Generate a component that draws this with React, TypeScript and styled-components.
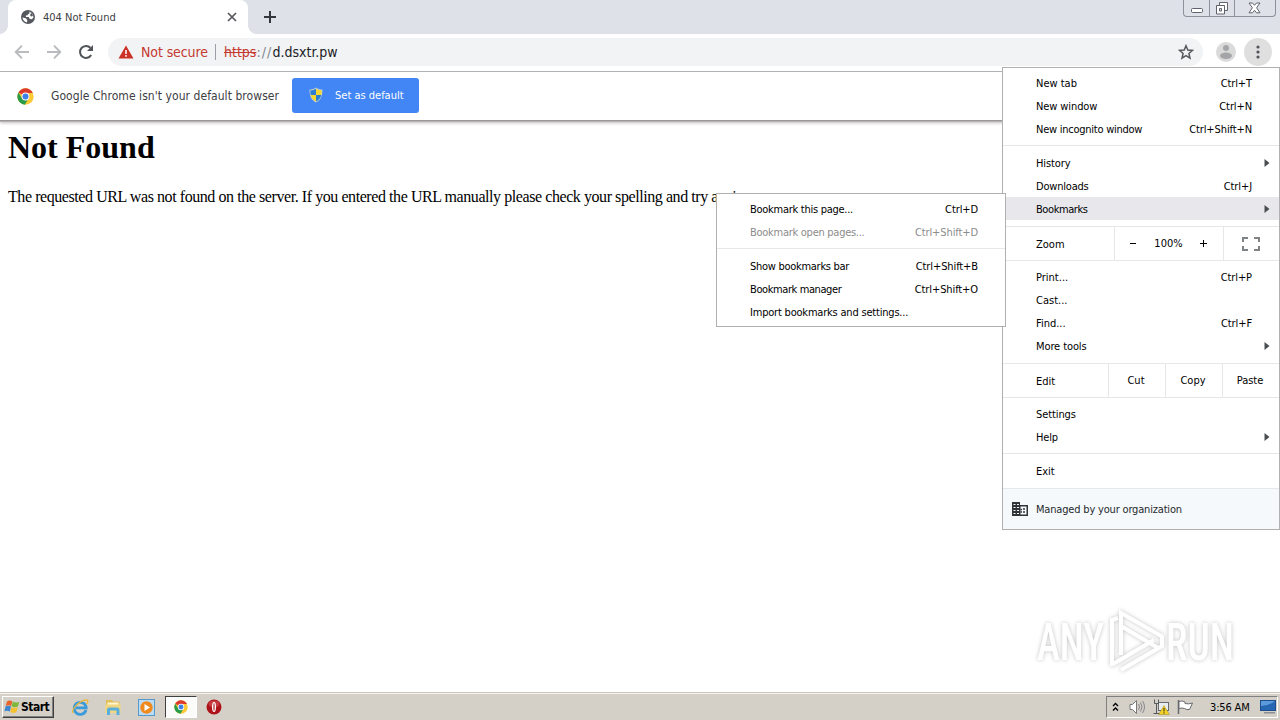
import React from "react";
import styled, { createGlobalStyle, css } from "styled-components";

const GlobalStyle = createGlobalStyle`
    * {
      box-sizing: border-box;
    }

    body {
      margin: 0;
      background: #fff;
      overflow: hidden;
    }
`;

const uiFont = css`
    font-family: "DejaVu Sans Condensed", "DejaVu Sans", sans-serif;
    font-stretch: condensed;
    white-space: pre;
`;

const StyledDesktop = styled.div`
    ${uiFont}
    display: flex;
    flex-direction: column;
    position: relative;
    width: 1280px;
    height: 720px;
    overflow: hidden;
    background: #fff;
    font-size: 11px;
    color: #000;
`;

const StyledTabStrip = styled.div`
    display: flex;
    height: 34px;
    padding-left: 8px;
    background: #dee1e8;
`;

const StyledTab = styled.div`
    display: flex;
    align-items: center;
    position: relative;
    width: 240px;
    height: 34px;
    padding: 0 10px 0 13px;
    border-radius: 8px 8px 0 0;
    background: #fff;
    color: #3c4043;

    &::before,
    &::after {
      content: "";
      position: absolute;
      bottom: 0;
      width: 8px;
      height: 8px;
    }

    &::before {
      left: -8px;
      background: radial-gradient(circle at 0 0, transparent 7.5px, #fff 8px);
    }

    &::after {
      right: -8px;
      background: radial-gradient(circle at 100% 0, transparent 7.5px, #fff 8px);
    }
`;

const StyledTabTitle = styled.span`
    flex: 1;
    margin-left: 8px;
`;

const StyledNewTab = styled.div`
    display: flex;
    align-items: center;
    margin-left: 15px;
`;

const StyledCaptionButtons = styled.div`
    display: flex;
    width: 93px;
    height: 17px;
    margin: 0 4px 0 auto;
    border: 1px solid #8d919b;
    border-top: 0;
    border-radius: 0 0 4px 4px;
`;

const StyledCaptionButton = styled.div<{ $width: number }>`
    display: flex;
    justify-content: center;
    width: ${({ $width }) => $width}px;

    & + & {
      border-left: 1px solid #8d919b;
    }
`;

const StyledToolbar = styled.div`
    display: flex;
    align-items: center;
    height: 38px;
    padding: 0 8px 1px 14px;
    border-bottom: 1px solid #b4b5b7;
`;

const StyledNavButton = styled.div`
    display: flex;
    width: 32px;
`;

const StyledOmnibox = styled.div`
    display: flex;
    align-items: center;
    width: 1095px;
    height: 28px;
    margin-left: -2px;
    padding: 0 9px 0 10px;
    border-radius: 14px;
    background: #f1f3f5;
    font-size: 14px;
    color: #202124;
`;

const StyledNotSecure = styled.span`
    width: 67px;
    margin-left: 7px;
    color: #c5392f;
    letter-spacing: -0.1px;
`;

const StyledOmniboxDivider = styled.div`
    width: 1px;
    height: 16px;
    margin: 0 8px 0 7px;
    background: #9aa0a6;
`;

const StyledUrl = styled.span`
    flex: 1;

    s {
      color: #c5392f;
    }

    i {
      font-style: normal;
      letter-spacing: 1.1px;
      color: #80868b;
    }
`;

const StyledAvatar = styled.div`
    display: flex;
    margin-left: 13px;
`;

const StyledMenuButton = styled.div`
    display: flex;
    align-items: center;
    justify-content: center;
    width: 28px;
    height: 28px;
    margin-left: 8px;
    border-radius: 50%;
    background: #dfdfe0;
`;

const StyledInfoBar = styled.div`
    display: flex;
    align-items: center;
    height: 49px;
    padding-left: 17px;
    border-bottom: 1px solid #9b9799;
    box-shadow: 0 1px 0 #b5b2b4, 0 2px 3px rgba(0, 0, 0, 0.25);
    font-size: 12px;
    color: #3c4043;
`;

const StyledInfoText = styled.span`
    width: 241px;
    margin-left: 17px;
    letter-spacing: 0.06px;
`;

const StyledDefaultButton = styled.div`
    display: flex;
    align-items: center;
    width: 127px;
    height: 35px;
    margin-bottom: 2px;
    padding-left: 17px;
    border-radius: 3px;
    background: #4285f4;
    font-size: 11px;
    color: #fff;

    span {
      margin-left: 12px;
    }
`;

const StyledPage = styled.div`
    flex: 1;
    padding: 0 8px;
    font-family: "Liberation Serif", serif;
    font-size: 16px;

    h1 {
      margin: 8px 0 0;
      font-size: 32px;
      line-height: 37px;
    }

    p {
      margin: 22px 0 0;
      line-height: 18px;
      letter-spacing: -0.43px;
    }
`;

const StyledMenu = styled.div<{ $left: number; $top: number; $width: number; $bottomGap?: number }>`
    position: absolute;
    left: ${({ $left }) => $left}px;
    top: ${({ $top }) => $top}px;
    width: ${({ $width }) => $width}px;
    padding: 3px 0 ${({ $bottomGap = 0 }) => $bottomGap}px;
    border: 1px solid #b0b0b0;
    background: #fff;
`;

const StyledMenuItem = styled.div<{ $active?: boolean; $disabled?: boolean }>`
    display: flex;
    align-items: center;
    justify-content: space-between;
    position: relative;
    height: 23px;
    padding: 1px 27px 0 33px;
    background: ${({ $active }) => ($active ? "#e8e8ec" : "transparent")};
    color: ${({ $disabled }) => ($disabled ? "#8c8c8c" : "#000")};
`;

const StyledItemLabel = styled.span<{ $tracking?: number }>`
    letter-spacing: ${({ $tracking = 0 }) => $tracking}px;
`;

const StyledShortcut = styled.span`
    letter-spacing: -0.1px;
`;

const StyledArrow = styled.svg`
    position: absolute;
    right: 9px;
    top: 7px;
`;

const StyledSeparator = styled.div<{ $before?: number; $after?: number }>`
    height: 1px;
    margin-top: ${({ $before = 5 }) => $before}px;
    margin-bottom: ${({ $after = 5 }) => $after}px;
    background: #e6e7e8;
`;

const StyledMenuRow = styled.div`
    display: flex;
    height: 33px;
    line-height: 32px;
`;

const StyledRowLabel = styled.div<{ $width: number }>`
    width: ${({ $width }) => $width}px;
    padding: 2px 0 0 33px;
`;

const StyledRowCell = styled.div<{ $width: number }>`
    display: flex;
    align-items: center;
    justify-content: center;
    width: ${({ $width }) => $width}px;
    padding-right: 2px;
    border-left: 1px solid #e6e7e8;
`;

const StyledZoomCell = styled(StyledRowCell)`
    justify-content: space-between;
    padding: 0 15px 0 14px;
`;

const StyledFullscreenCell = styled(StyledRowCell)`
    padding-right: 1px;
`;

const StyledManaged = styled.div`
    display: flex;
    align-items: center;
    height: 40px;
    padding-left: 9px;
    background: #f5f9fc;
    color: #26292d;

    span {
      margin-left: 8px;
      letter-spacing: -0.18px;
    }
`;

const StyledWatermark = styled.svg`
    position: absolute;
    left: 1030px;
    top: 602px;
    filter: drop-shadow(0 0 2px rgba(0, 0, 0, 0.24));
`;

const StyledTaskbar = styled.div`
    display: flex;
    align-items: center;
    height: 28px;
    padding: 1px 2px 0;
    border-top: 1px solid #c9c6bf;
    background: #d4d0c8;
    box-shadow: inset 0 1px 0 #f4f3f0;
`;

const StyledStartButton = styled.div`
    display: flex;
    align-items: center;
    width: 52px;
    height: 22px;
    padding-left: 1px;
    border: 1px solid;
    border-color: #fff #404040 #404040 #fff;
    box-shadow: inset -1px -1px 0 #808080;
    font-size: 12px;
    font-weight: bold;

    span {
      letter-spacing: -0.5px;
    }
`;

const StyledQuickLaunch = styled.div`
    display: flex;
    align-items: center;
    margin-left: 9px;
`;

const StyledTask = styled.div<{ $pressed?: boolean }>`
    display: flex;
    align-items: center;
    justify-content: center;
    width: 33.5px;
    height: 22px;
    border: 1px solid transparent;

    ${({ $pressed }) => $pressed && css`
      width: 32px;
      margin: 0 1px;
      border-color: #404040 #fff #fff #404040;
      background: #fbfbfa;
    `}
`;

const StyledTray = styled.div`
    display: flex;
    align-items: center;
    width: 172px;
    height: 22px;
    margin-left: auto;
    padding-left: 5px;
    border: 1px solid;
    border-color: #808080 #fff #fff #808080;
`;

const StyledTrayIcon = styled.div<{ $gap: number }>`
    display: flex;
    margin-left: ${({ $gap }) => $gap}px;
`;

const StyledClock = styled.span`
    width: 41px;
    margin: 1px 0 0 16px;
    letter-spacing: -0.15px;
`;

type MenuEntry = {
  label: string;
  shortcut?: string;
  submenu?: boolean;
  active?: boolean;
  disabled?: boolean;
  tracking?: number;
};

const tabItems: MenuEntry[] = [
  { label: "New tab", shortcut: "Ctrl+T" },
  { label: "New window", shortcut: "Ctrl+N", tracking: -0.1 },
  { label: "New incognito window", shortcut: "Ctrl+Shift+N", tracking: -0.25 },
];

const historyItems: MenuEntry[] = [
  { label: "History", submenu: true, tracking: -0.1 },
  { label: "Downloads", shortcut: "Ctrl+J", tracking: -0.2 },
  { label: "Bookmarks", submenu: true, active: true, tracking: -0.42 },
];

const toolItems: MenuEntry[] = [
  { label: "Print...", shortcut: "Ctrl+P" },
  { label: "Cast..." },
  { label: "Find...", shortcut: "Ctrl+F" },
  { label: "More tools", submenu: true, tracking: -0.1 },
];

const settingsItems: MenuEntry[] = [
  { label: "Settings", tracking: -0.1 },
  { label: "Help", submenu: true, tracking: -0.2 },
];

const pageItems: MenuEntry[] = [
  { label: "Bookmark this page...", shortcut: "Ctrl+D", tracking: -0.27 },
  { label: "Bookmark open pages...", shortcut: "Ctrl+Shift+D", disabled: true, tracking: -0.27 },
];

const managerItems: MenuEntry[] = [
  { label: "Show bookmarks bar", shortcut: "Ctrl+Shift+B", tracking: -0.28 },
  { label: "Bookmark manager", shortcut: "Ctrl+Shift+O", tracking: -0.4 },
  { label: "Import bookmarks and settings...", tracking: -0.2 },
];

function MenuItems({ items }: { items: MenuEntry[] }) {
  return (
    <>
      {items.map((item) => (
        <StyledMenuItem key={item.label} $active={item.active} $disabled={item.disabled}>
          <StyledItemLabel $tracking={item.tracking}>{item.label}</StyledItemLabel>
          {item.shortcut && <StyledShortcut>{item.shortcut}</StyledShortcut>}
          {item.submenu && (
            <StyledArrow width="6" height="9" viewBox="0 0 6 9">
              <path d="M0.500 1 L5.500 5 L0.500 9Z" fill="#4a4d51"/>
            </StyledArrow>
          )}
        </StyledMenuItem>
      ))}
    </>
  );
}

function ChromeLogo({ size }: { size: number }) {
  return (
    <svg width={size} height={size} viewBox="0 0 48 48">
      <circle cx="24" cy="24" r="23" fill="#fbc934"/>
      <path d="M24 24 L4.100 12.500 A23 23 0 0 1 43.900 12.500 L44 14 L24 14Z" fill="#dc3a2c"/>
      <path d="M4.100 12.500 A23 23 0 0 0 22 47 L33 29 L24 24 L14.500 29.500Z" fill="#2a9b48"/>
      <circle cx="24" cy="24" r="11" fill="#fff"/>
      <circle cx="24" cy="24" r="8.500" fill="#3f7fe8"/>
    </svg>
  );
}

function Globe() {
  return (
    <svg width="14" height="14" viewBox="0 0 14 14">
      <circle cx="7" cy="7" r="7" fill="#55595e"/>
      <path d="M8.300 1.600 L8.600 3.200 L7 4.200 L6.500 5.300 L4.800 5.600 L5 7 L7.800 7 L8.500 8.800 L10.500 9.200 L12.300 8 A5.600 5.600 0 0 0 8.300 1.600Z" fill="#fff"/>
      <path d="M9.300 2.300 L11.400 4 L12 6 L10 6.500 L9 5 L10 3.800Z" fill="#55595e"/>
      <path d="M1.500 7.500 L4.800 8.300 L6.300 10 L6 12.400 A5.500 5.500 0 0 1 1.500 7.500Z" fill="#fff"/>
    </svg>
  );
}

function Shield() {
  return (
    <svg width="14" height="16" viewBox="0 0 14 16">
      <path d="M7 0.500 C9 2 11 2.500 13.500 2.500 C13.500 9 12 13 7 15.500 C2 13 0.500 9 0.500 2.500 C3 2.500 5 2 7 0.500Z" fill="#c3cdd2"/>
      <path d="M7 1.800 V8 H1.700 Q1.300 6 1.400 3.500 Q5 3.300 7 1.800Z" fill="#2c7fd0"/>
      <path d="M7 1.800 V8 H12.300 Q12.700 6 12.600 3.500 Q9 3.300 7 1.800Z" fill="#f6d62f"/>
      <path d="M7 8 H1.700 Q2.600 12.500 7 14.400Z" fill="#f6d62f"/>
      <path d="M7 8 H12.300 Q11.400 12.500 7 14.400Z" fill="#2c7fd0"/>
    </svg>
  );
}

function BrowserHeader() {
  return (
    <>
      <StyledTabStrip>
        <StyledTab>
          <Globe/>
          <StyledTabTitle>404 Not Found</StyledTabTitle>
          <svg width="12" height="12" viewBox="0 0 12 12">
            <path d="M2 2 L10 10 M10 2 L2 10" stroke="#54575b" strokeWidth="1.700"/>
          </svg>
        </StyledTab>
        <StyledNewTab>
          <svg width="14" height="14" viewBox="0 0 14 14">
            <path d="M7 1 V13 M1 7 H13" stroke="#33363a" strokeWidth="2"/>
          </svg>
        </StyledNewTab>
        <StyledCaptionButtons>
          <StyledCaptionButton $width={25}>
            <svg width="14" height="16" viewBox="0 0 14 16">
              <rect x="1.500" y="8.500" width="11" height="4" rx="1" fill="#fff" stroke="#5f636c"/>
            </svg>
          </StyledCaptionButton>
          <StyledCaptionButton $width={25}>
            <svg width="14" height="16" viewBox="0 0 14 16">
              <path d="M4.500 2.500 H12.500 V10.500 H4.500Z" fill="#fff" stroke="#5f636c"/>
              <path d="M1.500 5.500 H9.500 V14 H1.500Z" fill="#fff" stroke="#5f636c"/>
              <path d="M4.500 8.500 H6.500 V11 H4.500Z" fill="#dee1e8" stroke="#5f636c"/>
            </svg>
          </StyledCaptionButton>
          <StyledCaptionButton $width={40}>
            <svg width="13" height="16" viewBox="0 0 13 16">
              <path
                d="M1 3 H4.500 L6.500 5.300 L8.500 3 H12 L8.600 7.800 L12 12.800 H8.500 L6.500 10.300 L4.500 12.800 H1 L4.400 7.800Z"
                fill="#fff"
                stroke="#5f636c"
              />
            </svg>
          </StyledCaptionButton>
        </StyledCaptionButtons>
      </StyledTabStrip>
      <StyledToolbar>
        <StyledNavButton>
          <svg width="16" height="16" viewBox="0 0 16 16">
            <path d="M15 8 H2 M8 1.700 L1.700 8 L8 14.300" fill="none" stroke="#b9bbbe" strokeWidth="1.900"/>
          </svg>
        </StyledNavButton>
        <StyledNavButton>
          <svg width="16" height="16" viewBox="0 0 16 16">
            <path d="M1 8 H14 M8 1.700 L14.300 8 L8 14.300" fill="none" stroke="#b9bbbe" strokeWidth="1.900"/>
          </svg>
        </StyledNavButton>
        <StyledNavButton>
          <svg width="16" height="16" viewBox="0 0 16 16">
            <path d="M13.200 11 A6 6 0 1 1 12.400 3.800" fill="none" stroke="#505357" strokeWidth="2"/>
            <path d="M15 1 V7 H9Z" fill="#505357"/>
          </svg>
        </StyledNavButton>
        <StyledOmnibox>
          <svg width="16" height="14" viewBox="0 0 16 14">
            <path d="M8 0.500 L15.500 13.500 H0.500Z" fill="#cb3127"/>
            <path d="M8 5 V9 M8 10 V11.800" stroke="#fff" strokeWidth="1.500"/>
          </svg>
          <StyledNotSecure>Not secure</StyledNotSecure>
          <StyledOmniboxDivider/>
          <StyledUrl><s>https</s><i>://</i>d.dsxtr.pw</StyledUrl>
          <svg width="16" height="16" viewBox="0 0 16 16">
            <path
              d="M8 1.700 L9.800 6 L14.500 6.400 L10.900 9.500 L12 14.100 L8 11.600 L4 14.100 L5.100 9.500 L1.500 6.400 L6.200 6Z"
              fill="none"
              stroke="#55585d"
              strokeWidth="1.500"
            />
          </svg>
        </StyledOmnibox>
        <StyledAvatar>
          <svg width="20" height="20" viewBox="0 0 20 20">
            <circle cx="10" cy="10" r="10" fill="#dadada"/>
            <circle cx="10" cy="6" r="3" fill="#a3a5a8"/>
            <ellipse cx="10" cy="13.800" rx="6" ry="3.200" fill="#a3a5a8"/>
          </svg>
        </StyledAvatar>
        <StyledMenuButton>
          <svg width="4" height="14" viewBox="0 0 4 14">
            <circle cx="2" cy="2" r="1.600" fill="#505357"/>
            <circle cx="2" cy="7" r="1.600" fill="#505357"/>
            <circle cx="2" cy="12" r="1.600" fill="#505357"/>
          </svg>
        </StyledMenuButton>
      </StyledToolbar>
      <StyledInfoBar>
        <ChromeLogo size={17}/>
        <StyledInfoText>Google Chrome isn't your default browser</StyledInfoText>
        <StyledDefaultButton>
          <Shield/>
          <span>Set as default</span>
        </StyledDefaultButton>
      </StyledInfoBar>
    </>
  );
}

function MainMenu() {
  return (
    <StyledMenu $left={1002} $top={67} $width={278}>
      <MenuItems items={tabItems}/>
      <StyledSeparator/>
      <MenuItems items={historyItems}/>
      <StyledSeparator $before={6} $after={0}/>
      <StyledMenuRow>
        <StyledRowLabel $width={111}>Zoom</StyledRowLabel>
        <StyledZoomCell $width={109}>
          <svg width="8" height="8" viewBox="0 0 8 8">
            <path d="M1 3.500 H7" stroke="#000"/>
          </svg>
          <span>100%</span>
          <svg width="8" height="8" viewBox="0 0 8 8">
            <path d="M0 3.500 H7 M3.500 0 V7" stroke="#000"/>
          </svg>
        </StyledZoomCell>
        <StyledFullscreenCell $width={56}>
          <svg width="18" height="14" viewBox="0 0 18 14">
            <path
              d="M1 5 V1 H6 M12 1 H17 V5 M17 9 V13 H12 M6 13 H1 V9"
              fill="none"
              stroke="#808386"
              strokeWidth="2"
            />
          </svg>
        </StyledFullscreenCell>
      </StyledMenuRow>
      <StyledSeparator $before={0} $after={4}/>
      <MenuItems items={toolItems}/>
      <StyledSeparator $before={6} $after={0}/>
      <StyledMenuRow>
        <StyledRowLabel $width={105}>Edit</StyledRowLabel>
        <StyledRowCell $width={57}>Cut</StyledRowCell>
        <StyledRowCell $width={57}>Copy</StyledRowCell>
        <StyledRowCell $width={57}>Paste</StyledRowCell>
      </StyledMenuRow>
      <StyledSeparator $before={0} $after={4}/>
      <MenuItems items={settingsItems}/>
      <StyledSeparator/>
      <MenuItems items={[{ label: "Exit" }]}/>
      <StyledSeparator $before={6} $after={0}/>
      <StyledManaged>
        <svg width="16" height="14" viewBox="0 0 16 14">
          <path d="M0 0 H8 V3 H16 V14 H0Z" fill="#303438"/>
          <path
            d="M1.500 2.500 H3.500 M5 2.500 H7 M1.500 5.500 H3.500 M5 5.500 H7 M1.500 8.500 H3.500 M5 8.500 H7 M1.500 11.500 H3.500 M5 11.500 H7"
            stroke="#f5f9fc"
            strokeWidth="1.200"
          />
          <path d="M8.500 4.500 H14.500 V12.500 H8.500Z" fill="#f5f9fc"/>
          <path d="M8.500 7.500 H10 M8.500 10 H10 M11 7 H13 M11 10 H13" stroke="#303438" strokeWidth="1.500"/>
        </svg>
        <span>Managed by your organization</span>
      </StyledManaged>
    </StyledMenu>
  );
}

function BookmarksMenu() {
  return (
    <StyledMenu $left={716} $top={193} $width={290} $bottomGap={3}>
      <MenuItems items={pageItems}/>
      <StyledSeparator/>
      <MenuItems items={managerItems}/>
    </StyledMenu>
  );
}

function Watermark() {
  return (
    <StyledWatermark width="246" height="84" viewBox="0 0 246 84">
      <g fill="#fff" fontFamily="Roboto, sans-serif" fontSize="51" fontWeight="500">
        <text x="7" y="58" textLength="67" lengthAdjust="spacingAndGlyphs">ANY</text>
        <text x="136" y="58" textLength="68" lengthAdjust="spacingAndGlyphs">RUN</text>
      </g>
      <g fill="none" stroke="#fff" strokeWidth="4">
        <path d="M91 53 V11 L133 35 M91 24 L128 46"/>
        <path d="M82 64 V18 L88 16 M91 68 L132 44 V34 M83 62 L124 38"/>
      </g>
    </StyledWatermark>
  );
}

function Taskbar() {
  return (
    <StyledTaskbar>
      <StyledStartButton>
        <svg width="17" height="16" viewBox="0 0 16 16">
          <path d="M2.500 2.500 Q5 0.500 7.800 2.300 L6.600 7 Q4 5.500 1.200 7Z" fill="#e8622b"/>
          <path d="M8.300 2.600 Q11.500 4.500 14.800 2.700 L13.500 7.300 Q10.500 9 7.100 7.300Z" fill="#7db83a"/>
          <path d="M1 7.500 Q3.700 6 6.500 7.500 L5.300 12.500 Q2.600 11 0 12.400Z" fill="#3d86cf"/>
          <path d="M7 7.900 Q10.300 9.700 13.400 7.900 L12 13 Q9 14.800 5.800 13Z" fill="#f6c130"/>
        </svg>
        <span>Start</span>
      </StyledStartButton>
      <StyledQuickLaunch>
        <StyledTask>
          <svg width="18" height="18" viewBox="0 0 18 18">
            <path d="M15 12 A6 6 0 1 1 15.200 9.800 H5" fill="none" stroke="#3b9ad9" strokeWidth="2.800"/>
            <path d="M2 15 C0 12 8 2 16 2 C18 3 16 5 15.500 6" fill="none" stroke="#e9b83a" strokeWidth="1.300"/>
          </svg>
        </StyledTask>
        <StyledTask>
          <svg width="18" height="18" viewBox="0 0 18 18">
            <path d="M2 2 H8 L9 3.500 H15.500 V13 H2Z" fill="#e2bd58"/>
            <path d="M3.500 4.500 H14.500 V8 H3.500Z" fill="#fff6cf"/>
            <path d="M1.500 6.500 H16.500 V15 H1.500Z" fill="#f0d67f"/>
            <path d="M3 17 V12 Q3 9.500 5.500 9.500 H13 Q15.500 9.500 15.500 12 V17 H12.500 V12.500 H6 V17Z" fill="#5aaede"/>
          </svg>
        </StyledTask>
        <StyledTask>
          <svg width="17" height="17" viewBox="0 0 17 17">
            <rect x="0.500" y="0.500" width="16" height="16" fill="#bcdcf3" stroke="#5599cc"/>
            <circle cx="8.500" cy="8.500" r="6.200" fill="#f08a1c"/>
            <path d="M6.500 5 L12 8.500 L6.500 12Z" fill="#fff"/>
          </svg>
        </StyledTask>
        <StyledTask $pressed>
          <ChromeLogo size={14}/>
        </StyledTask>
        <StyledTask>
          <svg width="16" height="16" viewBox="0 0 16 16">
            <circle cx="8" cy="8" r="7.500" fill="#ad1319"/>
            <ellipse cx="8" cy="5" rx="5.500" ry="3.500" fill="#d5565a" opacity="0.6"/>
            <ellipse cx="8" cy="8" rx="2" ry="5" fill="#fff"/>
            <ellipse cx="8" cy="8" rx="0.600" ry="4" fill="#ad1319"/>
          </svg>
        </StyledTask>
      </StyledQuickLaunch>
      <StyledTray>
        <svg width="7" height="10" viewBox="0 0 7 10">
          <path d="M1 4 L3.500 1.500 L6 4 M1 8.500 L3.500 6 L6 8.500" fill="none" stroke="#000" strokeWidth="1.400"/>
        </svg>
        <StyledTrayIcon $gap={10}>
          <svg width="17" height="16" viewBox="0 0 17 16">
            <path d="M1 5.500 H3.500 L7.500 1.500 V14.500 L3.500 10.500 H1Z" fill="#fff" stroke="#77797b"/>
            <path d="M9.500 5 Q11.500 8 9.500 11 M11.500 3.500 Q14.500 8 11.500 12.500 M13.500 2 Q17.500 8 13.500 14" fill="none" stroke="#85878a"/>
          </svg>
        </StyledTrayIcon>
        <StyledTrayIcon $gap={7}>
          <svg width="17" height="16" viewBox="0 0 17 16">
            <rect x="5.500" y="3.500" width="10" height="8" fill="#e9edf0" stroke="#66696d"/>
            <path d="M1.500 0.500 V4.500 H5.500 V0.500 M3.500 5 V15 M0.500 14.500 H10" fill="none" stroke="#55585c"/>
            <path d="M11 6.500 L16.300 15.500 H5.700Z" fill="#f7d423" stroke="#a08a20" strokeWidth="0.500"/>
            <path d="M11 9 V12.500 M11 13.300 V14.600" stroke="#222"/>
          </svg>
        </StyledTrayIcon>
        <StyledTrayIcon $gap={7}>
          <svg width="17" height="16" viewBox="0 0 17 16">
            <path d="M1.500 1 V15" stroke="#66696d" strokeWidth="1.500"/>
            <path d="M2 2.500 Q5 1 8 3 V4.500 Q11 5.500 15.500 4 L12.500 10.500 Q9.500 11 7.500 9.500 Q5 8.500 2 9.500Z" fill="#fff" stroke="#66696d"/>
          </svg>
        </StyledTrayIcon>
        <StyledClock>3:56 AM</StyledClock>
        <StyledTrayIcon $gap={9}>
          <svg width="16" height="14" viewBox="0 0 16 14">
            <rect x="0.500" y="0.500" width="15" height="10" fill="#2667b4" stroke="#1d4f8f"/>
            <path d="M1 6 Q8 6 15 1 H1Z" fill="#5b9bdc"/>
            <path d="M4 12 H15 V13.500 H4Z" fill="#8b8f94"/>
          </svg>
        </StyledTrayIcon>
      </StyledTray>
    </StyledTaskbar>
  );
}

export default function App(): React.JSX.Element {
  return (
    <StyledDesktop>
      <GlobalStyle/>
      <BrowserHeader/>
      <StyledPage>
        <h1>Not Found</h1>
        <p>
          The requested URL was not found on the server. If you entered the URL manually please check your spelling and try again.
        </p>
      </StyledPage>
      <Watermark/>
      <Taskbar/>
      <MainMenu/>
      <BookmarksMenu/>
    </StyledDesktop>
  );
}
